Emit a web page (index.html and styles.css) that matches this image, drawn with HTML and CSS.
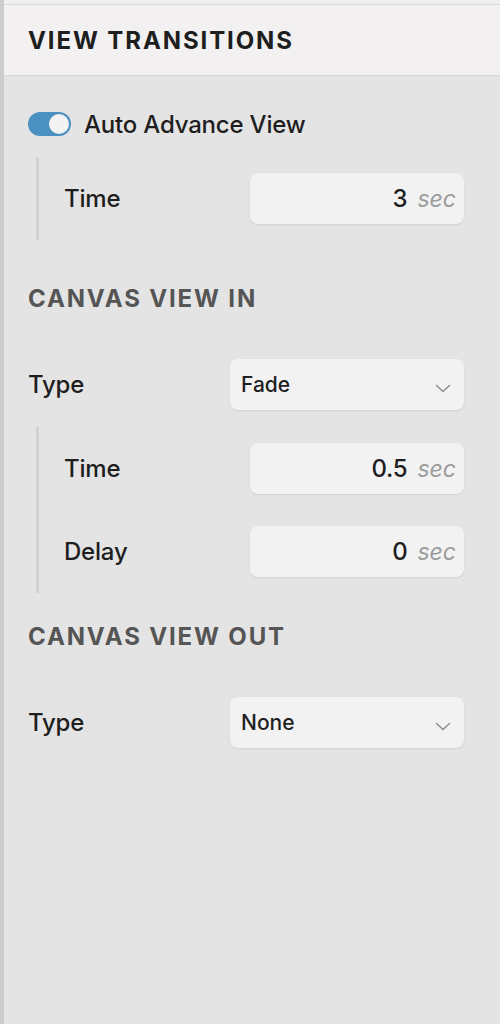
FILE: index.html
```html
<!DOCTYPE html>
<html>
<head>
<meta charset="utf-8">
<link rel="stylesheet" href="styles.css">
</head>
<body>
<div class="app">
  <div class="edge"></div>
  <div class="panel">
    <div class="topstrip"></div>
    <header class="header"><h1>VIEW TRANSITIONS</h1></header>
    <div class="content">
      <div class="toggle-row">
        <span class="toggle"><span class="knob"></span></span>
        <span class="toggle-label">Auto Advance View</span>
      </div>
      <div class="group group-first">
        <div class="row">
          <span class="label">Time</span>
          <div class="field"><span class="num">3</span><span class="unit">sec</span></div>
        </div>
      </div>

      <h2 class="section section-in">CANVAS VIEW IN</h2>
      <div class="row">
        <span class="label">Type</span>
        <div class="select"><span>Fade</span>
          <svg class="chev" width="16" height="9" viewBox="0 0 16 9"><path d="M1.5 1.5 L8 7.5 L14.5 1.5" fill="none" stroke="#8a8a8a" stroke-width="1.4" stroke-linecap="round" stroke-linejoin="round"/></svg>
        </div>
      </div>
      <div class="group group-in">
        <div class="row">
          <span class="label">Time</span>
          <div class="field"><span class="num">0.5</span><span class="unit">sec</span></div>
        </div>
        <div class="row row-gap">
          <span class="label">Delay</span>
          <div class="field"><span class="num">0</span><span class="unit">sec</span></div>
        </div>
      </div>

      <h2 class="section section-out">CANVAS VIEW OUT</h2>
      <div class="row">
        <span class="label">Type</span>
        <div class="select"><span>None</span>
          <svg class="chev" width="16" height="9" viewBox="0 0 16 9"><path d="M1.5 1.5 L8 7.5 L14.5 1.5" fill="none" stroke="#8a8a8a" stroke-width="1.4" stroke-linecap="round" stroke-linejoin="round"/></svg>
        </div>
      </div>
    </div>
  </div>
</div>
</body>
</html>
```

FILE: styles.css
```css
html, body {
  margin: 0;
  padding: 0;
  height: 100%;
}
body {
  background: #e4e4e4;
  font-family: Inter, "Noto Sans", sans-serif;
  color: #1c1c1c;
}
.app {
  display: flex;
  min-height: 1024px;
}
.edge {
  width: 4px;
  background: #cdcdcd;
  flex: none;
}
.panel {
  flex: 1;
  display: flex;
  flex-direction: column;
}
.topstrip {
  height: 4px;
  background: #f0eff0;
  border-bottom: 1px solid #d9d8d9;
}
.header {
  height: 70px;
  background: #f2f0f1;
  border-bottom: 1px solid #d6d6d6;
  display: flex;
  align-items: center;
  padding-left: 24px;
}
.header h1 {
  margin: 0;
  font-size: 24px;
  font-weight: 700;
  letter-spacing: 1.9px;
  color: #1e1e1e;
  line-height: 28px;
  padding-top: 1px;
}
.content {
  padding: 0 36px 0 24px;
}
.toggle-row {
  display: flex;
  align-items: center;
  margin-top: 36px;
  height: 24px;
}
.toggle {
  width: 43px;
  height: 24px;
  border-radius: 12px;
  background: #4a90c0;
  display: flex;
  align-items: center;
  justify-content: flex-end;
  padding-right: 2px;
  box-sizing: border-box;
  flex: none;
}
.knob {
  width: 20px;
  height: 20px;
  border-radius: 50%;
  background: #f4f3f4;
}
.toggle-label {
  margin-left: 13px;
  font-size: 24px;
  font-weight: 500;
  letter-spacing: -0.2px;
  color: #1e1e1e;
}
.group {
  margin-left: 8px;
  border-left: 3px solid #d1d1d1;
  padding: 16px 0 16px 25px;
}
.group-first {
  margin-top: 21px;
}
.group-in {
  margin-top: 17px;
}
.row {
  display: flex;
  align-items: center;
  justify-content: space-between;
  height: 51px;
}
.row-gap {
  margin-top: 32px;
}
.label {
  font-size: 24px;
  font-weight: 500;
  letter-spacing: -0.2px;
  color: #1e1e1e;
}
.field, .select {
  height: 51px;
  box-sizing: border-box;
  background: #f2f2f2;
  border-radius: 8px;
  box-shadow: 0 1px 2px rgba(0, 0, 0, 0.09);
  display: flex;
  align-items: center;
}
.field {
  width: 214px;
  justify-content: flex-end;
  padding-right: 8px;
}
.num {
  font-size: 24px;
  font-weight: 500;
  letter-spacing: -0.2px;
  color: #1e1e1e;
}
.unit {
  font-size: 23px;
  font-style: italic;
  color: #9b9b9b;
  margin-left: 10px;
}
.select {
  width: 234px;
  justify-content: space-between;
  padding: 0 13px 0 11px;
  font-size: 21px;
  font-weight: 500;
  color: #1e1e1e;
}
.chev {
  margin-top: 7px;
}
.section {
  margin: 0;
  font-size: 24px;
  font-weight: 700;
  letter-spacing: 1.85px;
  color: #555555;
  line-height: 24px;
}
.section-in {
  margin-top: 47px;
  margin-bottom: 48px;
}
.section-out {
  margin-top: 32px;
  margin-bottom: 48px;
}
```
